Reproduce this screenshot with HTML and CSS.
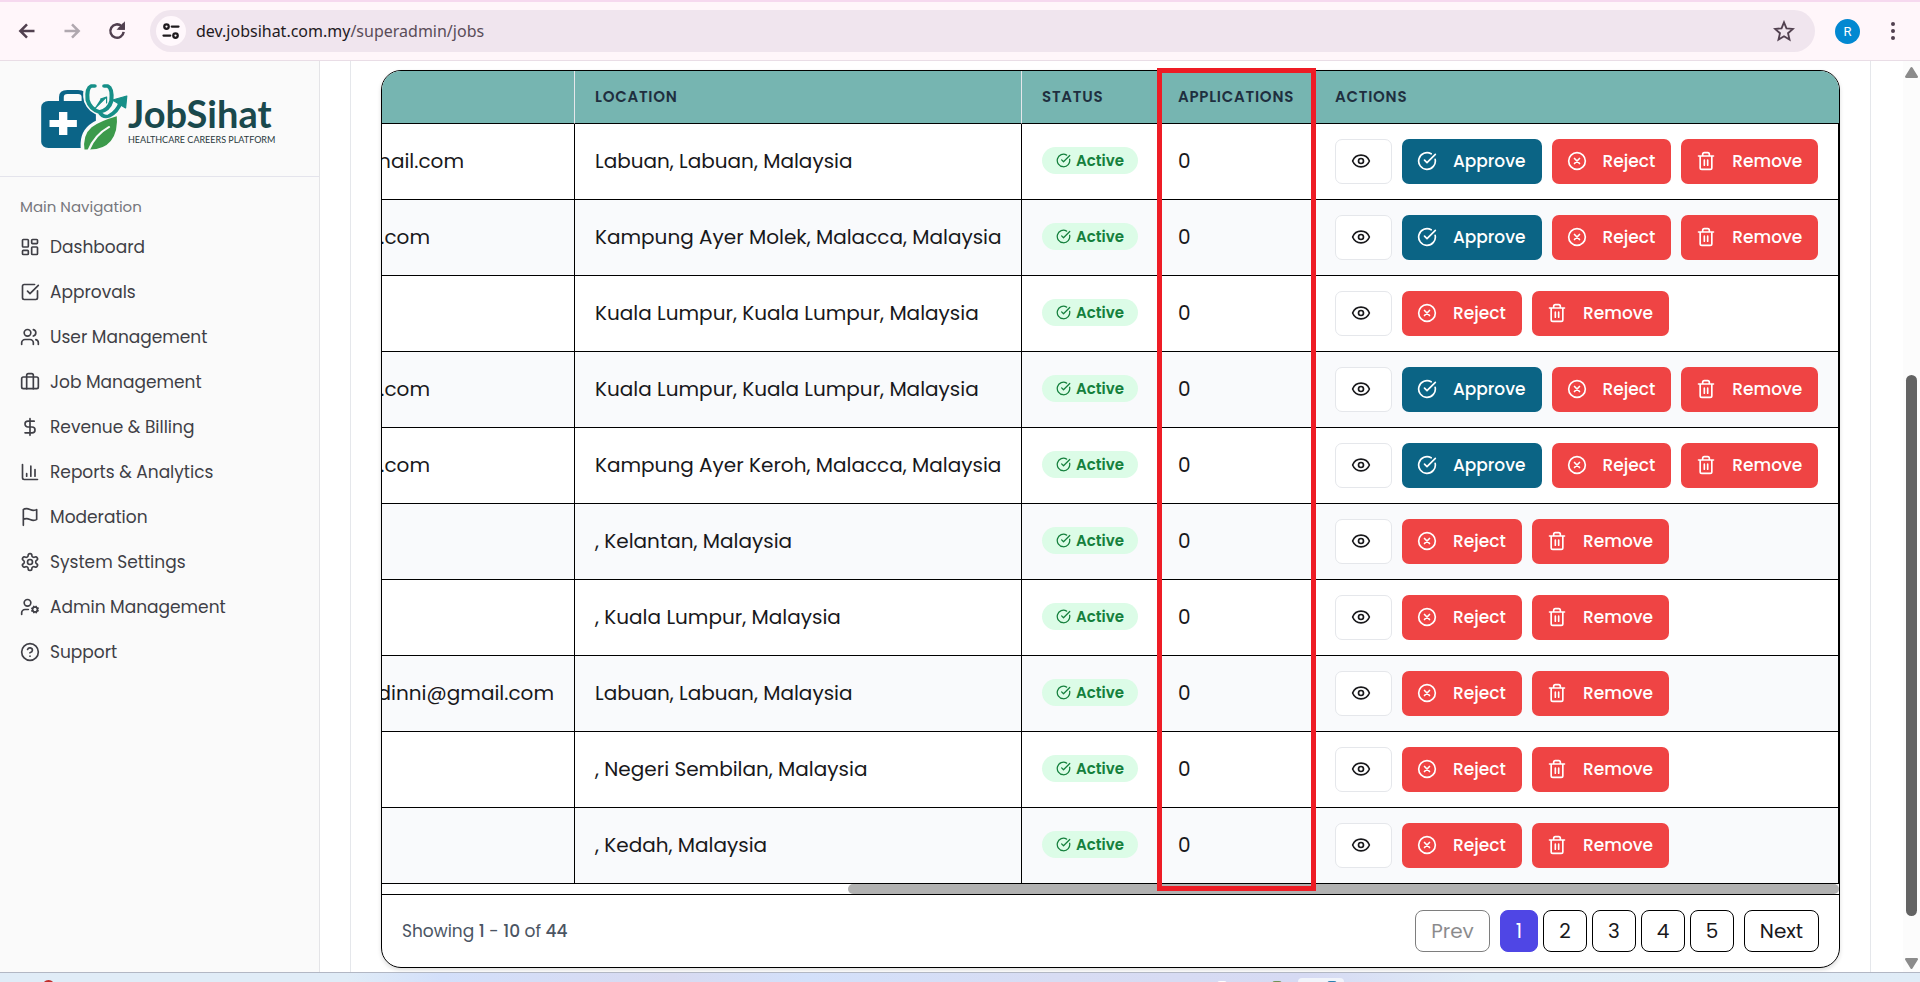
FILE: index.html
```html
<!DOCTYPE html>
<html lang="en">
<head>
<meta charset="utf-8">
<title>JobSihat – Jobs</title>
<link rel="stylesheet" href="styles.css">
</head>
<body>
<svg class="defs" aria-hidden="true">
  <symbol id="i-eye" viewBox="0 0 24 24"><path d="M2.06 12.35a1 1 0 0 1 0-.7 10.75 10.75 0 0 1 19.88 0 1 1 0 0 1 0 .7 10.75 10.75 0 0 1-19.88 0"/><circle cx="12" cy="12" r="3"/></symbol>
  <symbol id="i-check" viewBox="0 0 24 24"><path d="M21.8 10A10 10 0 1 1 17 3.34"/><path d="m9 11 3 3L22 4"/></symbol>
  <symbol id="i-x" viewBox="0 0 24 24"><circle cx="12" cy="12" r="10"/><path d="m15 9-6 6M9 9l6 6"/></symbol>
  <symbol id="i-trash" viewBox="0 0 24 24"><path d="M3 6h18M19 6v14a2 2 0 0 1-2 2H7a2 2 0 0 1-2-2V6M8 6V4a2 2 0 0 1 2-2h4a2 2 0 0 1 2 2v2M10 11v6M14 11v6"/></symbol>
</svg>
<header class="toolbar">
  <button class="tool" aria-label="Back"><svg viewBox="0 0 24 24"><path d="M21 12H4M12 4l-8 8 8 8"/></svg></button>
  <button class="tool off" aria-label="Forward"><svg viewBox="0 0 24 24"><path d="M3 12h17M12 4l8 8-8 8"/></svg></button>
  <button class="tool" aria-label="Reload"><svg viewBox="0 0 24 24"><path d="M20 13a8 8 0 1 1-2.500-6.800L20 9M20 3v6h-6"/><path d="M20 4v5h-5z" fill="currentColor"/></svg></button>
  <div class="omnibox">
    <button class="site" aria-label="Site information"><svg viewBox="0 0 24 24"><circle cx="6" cy="6" r="3"/><path d="M13 6h9M2 18h9"/><circle cx="18" cy="18" r="3"/></svg></button>
    <span class="url">dev.jobsihat.com.my<span class="path">/superadmin/jobs</span></span>
    <button class="star" aria-label="Bookmark"><svg viewBox="0 0 24 24"><path d="m12 2.500 2.700 6.600 7.100.6-5.400 4.700 1.600 7L12 17.700l-6 3.700 1.600-7-5.400-4.700 7.100-.6z"/></svg></button>
  </div>
  <button class="avatar">R</button>
  <button class="dots" aria-label="Menu"><i></i><i></i><i></i></button>
</header>
<div class="view">
  <aside class="sidebar">
    <div class="brand">
      <svg class="mark" viewBox="0 0 74 70" preserveAspectRatio="none" aria-hidden="true">
        <path d="M18 16v-4q0-5 5-5h9q5 0 5 5v4" fill="none" stroke="#0b6487" stroke-width="4"/>
        <rect x="1" y="16" width="46" height="47" rx="6" fill="#0b6487"/>
        <path d="M15 28h7v8h8v7h-8v8h-7v-8H7v-7h8z" fill="#fff" transform="translate(1 -1)"/>
        <path d="M42 -2v18q0 12 10 14 10-2 10-14V-2" fill="#fafafa"/>
        <path d="M47 2h-5q-3 6-1 14 3 9 11 11 8-2 10-10 2-8-1-15h-5M52 27q2 6 7 5 9-3 12-17" fill="none" stroke="#fafafa" stroke-width="8"/>
        <path d="M66 29C46 36 33 42 36 66h6C58 66 68 54 66 29z" fill="#3c9a4b" stroke="#fafafa" stroke-width="3"/>
        <path d="M58 42Q46 50 41 65" fill="none" stroke="#fafafa" stroke-width="2"/>
        <path d="M46 1h-3q-4 2-3 14 2 9 10 12 8-2 10-11 1-13-3-15h-3M50 27q3 6 8 4 7-4 10-14" fill="none" stroke="#168f88" stroke-width="3.500"/>
        <path d="m61 15 12-4-1 12zM45 25l11-13-5 2M56 12v6" fill="#168f88" stroke="#168f88" stroke-width="1"/>
      </svg>
      <div class="words"><b>JobSihat</b><small>HEALTHCARE CAREERS PLATFORM</small></div>
    </div>
    <nav class="nav">
      <h2>Main Navigation</h2>
      <a href="#"><svg viewBox="0 0 24 24"><rect x="3" y="3" width="7" height="9" rx="1"/><rect x="14" y="3" width="7" height="5" rx="1"/><rect x="14" y="12" width="7" height="9" rx="1"/><rect x="3" y="16" width="7" height="5" rx="1"/></svg>Dashboard</a>
      <a href="#"><svg viewBox="0 0 24 24"><path d="M21 10.500V19a2 2 0 0 1-2 2H5a2 2 0 0 1-2-2V5a2 2 0 0 1 2-2h12.500"/><path d="m9 11 3 3L22 4"/></svg>Approvals</a>
      <a href="#"><svg viewBox="0 0 24 24"><path d="M16 21v-2a4 4 0 0 0-4-4H6a4 4 0 0 0-4 4v2"/><circle cx="9" cy="7" r="4"/><path d="M22 21v-2a4 4 0 0 0-3-3.870M16 3.130a4 4 0 0 1 0 7.750"/></svg>User Management</a>
      <a href="#"><svg viewBox="0 0 24 24"><path d="M16 20V4a2 2 0 0 0-2-2h-4a2 2 0 0 0-2 2v16"/><rect x="2" y="6" width="20" height="14" rx="2"/></svg>Job Management</a>
      <a href="#"><svg viewBox="0 0 24 24"><path d="M12 2v20M17 5H9.500a3.500 3.500 0 0 0 0 7h5a3.500 3.500 0 0 1 0 7H6"/></svg>Revenue &amp; Billing</a>
      <a href="#"><svg viewBox="0 0 24 24"><path d="M3 3v16a2 2 0 0 0 2 2h16M8 17v-3M13 17V5M18 17V9"/></svg>Reports &amp; Analytics</a>
      <a href="#"><svg viewBox="0 0 24 24"><path d="M4 15s1-1 4-1 5 2 8 2 4-1 4-1V3s-1 1-4 1-5-2-8-2-4 1-4 1zM4 22v-7"/></svg>Moderation</a>
      <a href="#"><svg viewBox="0 0 24 24"><path d="M12.220 2h-.44a2 2 0 0 0-2 2v.18a2 2 0 0 1-1 1.730l-.43.25a2 2 0 0 1-2 0l-.15-.08a2 2 0 0 0-2.730.73l-.22.38a2 2 0 0 0 .73 2.730l.15.1a2 2 0 0 1 1 1.720v.51a2 2 0 0 1-1 1.740l-.15.09a2 2 0 0 0-.73 2.730l.22.38a2 2 0 0 0 2.730.73l.15-.08a2 2 0 0 1 2 0l.43.25a2 2 0 0 1 1 1.730V20a2 2 0 0 0 2 2h.44a2 2 0 0 0 2-2v-.18a2 2 0 0 1 1-1.730l.43-.25a2 2 0 0 1 2 0l.15.08a2 2 0 0 0 2.730-.73l.22-.39a2 2 0 0 0-.73-2.730l-.15-.08a2 2 0 0 1-1-1.740v-.5a2 2 0 0 1 1-1.740l.15-.09a2 2 0 0 0 .73-2.730l-.22-.38a2 2 0 0 0-2.730-.73l-.15.08a2 2 0 0 1-2 0l-.43-.25a2 2 0 0 1-1-1.730V4a2 2 0 0 0-2-2z"/><circle cx="12" cy="12" r="3"/></svg>System Settings</a>
      <a href="#"><svg viewBox="0 0 24 24"><circle cx="9" cy="7" r="4"/><path d="M10 15H6a4 4 0 0 0-4 4v2"/><circle cx="18" cy="15" r="3"/><path d="m21.700 16.400-.9-.3M15.200 13.900l-.9-.3M16.600 18.700l.3-.9M19.100 12.200l.3-.9M19.600 18.700l-.4-1M16.800 12.300l-.4-1M14.300 16.600l1-.4M20.700 13.800l1-.4"/></svg>Admin Management</a>
      <a href="#"><svg viewBox="0 0 24 24"><circle cx="12" cy="12" r="10"/><path d="M9.090 9a3 3 0 0 1 5.830 1c0 2-3 3-3 3M12 17h.01"/></svg>Support</a>
    </nav>
  </aside>
  <main class="main">
    <div class="frame">
      <section class="card">
        <table>
          <colgroup><col class="c-mail"><col class="c-loc"><col class="c-stat"><col class="c-apps"><col></colgroup>
          <thead><tr><th aria-label="Email"></th><th>LOCATION</th><th>STATUS</th><th>APPLICATIONS</th><th>ACTIONS</th></tr></thead>
          <tbody id="rows"></tbody>
        </table>
        <div class="hbar"><i></i></div>
        <footer class="pager">
          <p>Showing <b>1</b> - <b>10</b> of <b>44</b></p>
          <div class="pages">
            <button class="edge" disabled>Prev</button>
            <div class="nums"><button class="on">1</button><button>2</button><button>3</button><button>4</button><button>5</button></div>
            <button class="edge">Next</button>
          </div>
        </footer>
      </section>
      <div class="highlight"></div>
    </div>
  </main>
  <div class="vbar"><svg viewBox="0 0 12 10"><path d="M6 1 11 9H1z"/></svg><i></i><svg viewBox="0 0 12 10"><path d="M6 9 11 1H1z"/></svg></div>
</div>
<div class="taskbar"><i class="app red"></i><i class="app white"></i><i class="app green"></i><i class="app tile"></i><i class="app blue"></i></div>
<script src="rows.js"></script>
</body>
</html>
```
FILE: rows.js
```js
const jobs = [
  ["mail.com", "Labuan, Labuan, Malaysia", true, "mid"],
  [".com", "Kampung Ayer Molek, Malacca, Malaysia", true, "short"],
  ["", "Kuala Lumpur, Kuala Lumpur, Malaysia", false, ""],
  [".com", "Kuala Lumpur, Kuala Lumpur, Malaysia", true, "short"],
  [".com", "Kampung Ayer Keroh, Malacca, Malaysia", true, "short"],
  ["", ", Kelantan, Malaysia", false, ""],
  ["", ", Kuala Lumpur, Malaysia", false, ""],
  ["dinni@gmail.com", "Labuan, Labuan, Malaysia", false, "long"],
  ["", ", Negeri Sembilan, Malaysia", false, ""],
  ["", ", Kedah, Malaysia", false, ""]
];
const icon = (id) => `<svg><use href="#i-${id}"/></svg>`;
document.getElementById("rows").innerHTML = jobs.map(([mail, place, pending, kind]) => `
  <tr>
    <td class="mail"><div class="clip ${kind}"><span>${mail}</span></div></td>
    <td>${place}</td>
    <td><span class="pill">${icon("check")}Active</span></td>
    <td>0</td>
    <td><div class="actions">
      <button class="btn view-btn" aria-label="View">${icon("eye")}</button>
      ${pending ? `<button class="btn approve">${icon("check")}Approve</button>` : ""}
      <button class="btn reject">${icon("x")}Reject</button>
      <button class="btn remove">${icon("trash")}Remove</button>
    </div></td>
  </tr>`).join("");
```
FILE: styles.css
```css
* { box-sizing: border-box; }
body { margin: 0; height: 100vh; display: flex; flex-direction: column; overflow: hidden; background: #fff; font-family: Poppins, Inter, sans-serif; color: #18181b; }
button { font: inherit; color: inherit; border: 0; background: none; padding: 0; }
svg { fill: none; stroke: currentColor; stroke-width: 2; stroke-linecap: round; stroke-linejoin: round; }
.defs { display: none; }

.toolbar { flex: none; height: 61px; padding: 0 23px 0 12px; display: flex; align-items: center; background: #fff6fa; border-top: 2px solid #f6d9ef; border-bottom: 1px solid #e9dde6; color: #51404f; }
.tool { width: 30px; height: 30px; margin-right: 15px; display: grid; place-items: center; }
.tool svg { width: 20px; height: 20px; stroke-width: 3; stroke-linecap: butt; stroke-linejoin: miter; }
.off { color: #b0a8af; }
.omnibox { flex: 1; height: 42px; margin-left: 3px; padding: 0 20px 0 6px; border-radius: 21px; background: #f0e5ee; display: flex; align-items: center; }
.site { width: 30px; height: 30px; border-radius: 50%; background: #fff8fc; display: grid; place-items: center; color: #1f1a1e; }
.site svg { width: 18px; height: 18px; stroke-width: 3; }
.url { flex: 1; padding-left: 10px; font: 16px "Noto Sans", sans-serif; color: #1f1a1e; }
.path { color: #5a4c58; }
.star svg { display: block; width: 22px; height: 22px; stroke-linejoin: miter; }
.avatar { width: 25px; height: 25px; margin: 0 28px 0 20px; border-radius: 50%; background: #0288d1; color: #fff; font: 13px Roboto, sans-serif; }
.dots { width: 9px; display: grid; gap: 3px; justify-items: center; }
.dots i { width: 4px; height: 4px; border-radius: 50%; background: #51404f; }

.view { flex: 1; min-height: 0; display: flex; }
.sidebar { flex: none; width: 320px; background: #fafafa; border-right: 1px solid #e4e4e7; }
.brand { height: 116px; padding: 3px 0 0 40px; display: flex; align-items: center; border-bottom: 1px solid #e4e4ec; }
.mark { flex: none; width: 88px; height: 70px; overflow: visible; stroke: none; }
.words { display: grid; gap: 1px; color: #1a494d; }
.words b { font: 700 38px/38px Lato, sans-serif; }
.words small { font: 9px/14px Lato, sans-serif; white-space: nowrap; color: #28383c; }
.nav { padding: 20px; }
.nav h2 { margin: 0 0 7px; font-size: 15px; line-height: 20px; font-weight: 400; color: #77777d; }
.nav a { display: flex; align-items: center; gap: 10px; height: 45px; font-size: 17px; color: #3f3f46; text-decoration: none; }
.nav svg { width: 20px; height: 20px; }

.main { flex: 1; min-width: 0; margin: 0 32px 0 30px; padding: 9px 30px 0; border: solid #e5e7eb; border-width: 0 1px; }
.frame { position: relative; }
.card { border: 1px solid #000; border-radius: 20px; overflow: hidden; box-shadow: 0 2px 4px #0002; }
table { width: 100%; table-layout: fixed; border-collapse: separate; border-spacing: 0; }
.c-mail { width: 193px; }
.c-loc { width: 447px; }
.c-stat { width: 136px; }
.c-apps { width: 157px; }
th { height: 53px; padding: 0 20px 1px; text-align: left; font-size: 15px; font-weight: 600; letter-spacing: .05em; color: #1f2f3f; background: #76b5b1; border-right: 1px solid #e5e7eb; border-bottom: 1px solid #000; }
th:last-child { border-right: 0; }
td { height: 76px; padding: 0 20px 2px; font-size: 20px; white-space: nowrap; border-right: 1px solid #000; border-bottom: 1px solid #000; }
td:last-child { padding-bottom: 0; }
tr:nth-child(even) td { background: #f9fafc; }
.mail { padding: 0 0 2px; }
.clip { display: flex; justify-content: flex-end; overflow: hidden; }
.mid { padding-right: 110px; }
.short { padding-right: 144px; }
.long { padding-right: 20px; }
.pill { display: flex; width: fit-content; align-items: center; gap: 5px; height: 27px; padding: 0 14px; border-radius: 14px; background: #dcfce7; color: #15803d; font-size: 15px; font-weight: 600; }
.pill svg { width: 15px; height: 15px; }
.actions { display: flex; gap: 10px; }
.btn { height: 45px; padding: 0 0 1px 15px; display: flex; align-items: center; gap: 15px; border-radius: 7px; color: #fff; font-size: 17px; font-weight: 500; background: #ef4444; }
.btn svg { width: 20px; height: 20px; }
.approve, .reject, .remove { gap: 16px; }
.view-btn { width: 57px; background: #fff; border: 1px solid #e5e7eb; color: #18181b; }
.approve { width: 140px; background: #0b6485; }
.reject { width: 120px; }
.remove { width: 137px; }
.highlight { position: absolute; left: 776px; top: -2px; bottom: 77px; width: 159px; border: 5px solid #ee1c25; }
.hbar { height: 11px; display: flex; justify-content: flex-end; border-bottom: 1px solid #000; }
.hbar i { width: 68%; border-radius: 5px; background: #b1b1b1; }
.pager { height: 72px; padding: 0 20px; display: flex; align-items: center; justify-content: space-between; font-size: 17px; color: #4b5563; }
.pager p { margin: 0; }
.pager b { font-weight: 500; }
.pages, .nums { display: flex; gap: 10px; color: #18181b; font-size: 20px; }
.nums { gap: 5px; }
.pages button { height: 42px; width: 44px; border: 1px solid #000; border-radius: 8px; }
.pages .edge { width: 75px; }
.pages .edge:disabled { opacity: .5; }
.pages .on { width: 38px; background: #4f46e5; border-color: #4f46e5; color: #fff; }

.vbar { flex: none; width: 17px; padding: 6px 0 3px; display: flex; flex-direction: column; align-items: center; background: #fcfcfc; }
.vbar svg { width: 13px; height: 11px; fill: #8b8b8b; stroke: #8b8b8b; }
.vbar i { width: 11px; height: 541px; margin-top: auto; margin-bottom: 42px; border-radius: 6px; background: #636363; }
.taskbar { flex: none; height: 10px; position: relative; overflow: hidden; border-top: 1px solid #b2b7c4; background: linear-gradient(90deg, #e0ecf7 0 18%, #d3dffa 23%, #d8daf1 35%, #d3e0fa 42%, #d8dcf3 55%, #d6daf3 68%, #dfebf7 77%, #e0ecf7); }
.app { position: absolute; top: 8px; width: 10px; height: 10px; border-radius: 3px; }
.red { left: 42px; top: 7px; width: 13px; height: 13px; border-radius: 50%; background: #c02a27; }
.white { left: 1217px; background: #fff; }
.green { left: 1272px; background: #6f9154; }
.tile { left: 1298px; top: 5px; width: 46px; height: 20px; border-radius: 4px; background: #f1f4fb; }
.blue { left: 1327px; background: #2a7fb0; }
```
